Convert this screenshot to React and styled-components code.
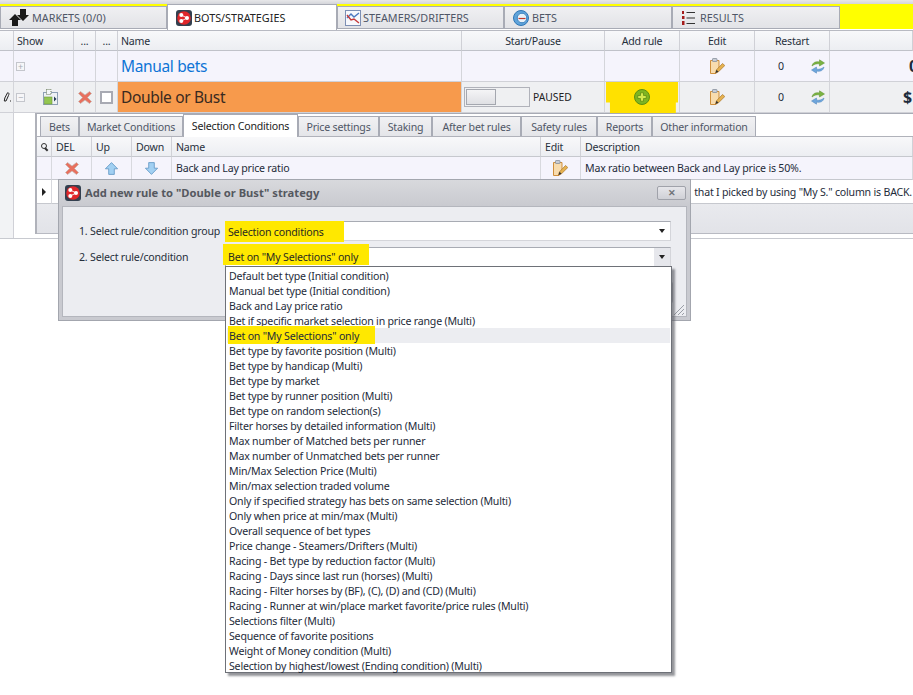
import styled, { createGlobalStyle } from 'styled-components';

const GlobalStyle = createGlobalStyle`
  html, body {
    margin: 0;
    padding: 0;
    background: #fff;
  }
  body {
    font-family: 'Noto Sans', 'Open Sans', sans-serif;
    font-size: 10.6px;
    letter-spacing: -0.2px;
    color: #1e2b3a;
  }
`;

const ITEMS = [
  'Default bet type (Initial condition)',
  'Manual bet type (Initial condition)',
  'Back and Lay price ratio',
  'Bet if specific market selection in price range (Multi)',
  'Bet on "My Selections" only',
  'Bet type by favorite position (Multi)',
  'Bet type by handicap (Multi)',
  'Bet type by market',
  'Bet type by runner position (Multi)',
  'Bet type on random selection(s)',
  'Filter horses by detailed information (Multi)',
  'Max number of Matched bets per runner',
  'Max number of Unmatched bets per runner',
  'Min/Max Selection Price (Multi)',
  'Min/max selection traded volume',
  'Only if specified strategy has bets on same selection (Multi)',
  'Only when price at min/max (Multi)',
  'Overall sequence of bet types',
  'Price change - Steamers/Drifters (Multi)',
  'Racing - Bet type by reduction factor (Multi)',
  'Racing - Days since last run (horses) (Multi)',
  'Racing - Filter horses by (BF), (C), (D) and (CD) (Multi)',
  'Racing - Runner at win/place market favorite/price rules (Multi)',
  'Selections filter (Multi)',
  'Sequence of favorite positions',
  'Weight of Money condition (Multi)',
  'Selection by highest/lowest (Ending condition) (Multi)',
];

const DETAIL_TABS = [
  ['Bets', 39],
  ['Market Conditions', 104],
  ['Selection Conditions', 115],
  ['Price settings', 81],
  ['Staking', 53],
  ['After bet rules', 89],
  ['Safety rules', 76],
  ['Reports', 55],
  ['Other information', 104],
];

const MAIN_COLUMNS = '14px 60px 22px 22px 344px 143px 75px 75px 75px 1fr';
const SUB_COLUMNS = '15px 40px 40px 40px 369px 40px 1fr';

function Logo({ size = 16 }) {
  return (
    <svg width={size} height={size} viewBox="0 0 16 16">
      <rect width="16" height="16" rx="3" fill="#33404f" />
      <circle cx="8" cy="8" r="6.8" fill="#e0262a" />
      <path d="M5.300 5l5.700 3-5.700 3" fill="none" stroke="#fff" strokeWidth=".9" />
      <circle cx="5.300" cy="5" r="2" fill="#fff" />
      <circle cx="5.300" cy="11" r="2" fill="#fff" />
      <circle cx="11" cy="8" r="2" fill="#fff" />
    </svg>
  );
}

function MarketsIcon() {
  return (
    <svg width="20" height="17" viewBox="0 0 20 17">
      <path d="M0 11 6 5l6 6H9v6H3v-6z" fill="#1a1a1a" />
      <path d="M20 6l-6 6-6-6h3V0h6v6z" fill="#1a1a1a" />
    </svg>
  );
}

function SteamersIcon() {
  return (
    <svg width="16" height="16" viewBox="0 0 16 16">
      <rect x=".5" y=".5" width="15" height="15" fill="#f7f8fc" stroke="#7d8fb4" />
      <path d="M2 8 6 4l3 3 5-4" fill="none" stroke="#4b78c0" strokeWidth="1.4" />
      <path d="M2 5l4 5 3-1 5 4" fill="none" stroke="#c5393a" strokeWidth="1.4" />
    </svg>
  );
}

function BetsIcon() {
  return (
    <svg width="16" height="16" viewBox="0 0 16 16">
      <circle cx="8" cy="8" r="7.500" fill="#5fa3da" stroke="#2f76b5" />
      <circle cx="9" cy="8" r="4.800" fill="#e9f1f8" stroke="#3c83bf" />
      <path d="M5.500 8.500h7" stroke="#c0392b" strokeWidth="1.200" />
    </svg>
  );
}

function ResultsIcon() {
  return (
    <svg width="13" height="14" viewBox="0 0 13 14">
      <path d="M0 0h2v3H0zM0 5h2.500v3H0zM0 10h2.500v4H0z" fill="#a51c1c" />
      <path d="M4.500 1.500H13M4.500 7H13M4.500 12.500H13" stroke="#333" />
    </svg>
  );
}

function EditIcon() {
  return (
    <svg width="15" height="16" viewBox="0 0 15 16">
      <path d="M.5 2.500h8.500v9.500L6 15.500H.5z" fill="#f8dcae" stroke="#cf8f3c" />
      <rect x="2.500" y=".5" width="4.500" height="3" rx=".6" fill="#c8cdd6" stroke="#7d8794" strokeWidth=".7" />
      <path d="M5.500 15l1-3.200L12.500 5.500 14.800 7.500l-6.300 6.300z" fill="#e6b24f" stroke="#a9762a" strokeWidth=".7" />
      <path d="M5.500 15l1-3.200 2 2z" fill="#333" />
    </svg>
  );
}

function RestartIcon() {
  return (
    <svg width="14" height="15" viewBox="0 0 14 15">
      <path d="M1 7C1.500 3.500 5 2 8.500 3V.8L13.500 4 8.500 7V5C6 4.400 3.500 5 1 7z" fill="#7bb342" stroke="#5a8f2c" strokeWidth=".5" />
      <path d="M13 8c-.5 3.500-4 5-7.500 4v2.200L.5 11l5-3v2c2.500.6 5 0 7.500-2z" fill="#6ea6dc" stroke="#4a82bb" strokeWidth=".5" />
    </svg>
  );
}

function DeleteIcon() {
  return (
    <svg width="14" height="13" viewBox="0 0 14 13">
      <path
        d="M2.500.5 7 4 11.500.5 13.500 2.500 9.500 6.500 13.500 10.500 11.500 12.500 7 9 2.500 12.500.5 10.500 4.500 6.500.5 2.500z"
        fill="#e8705f"
        stroke="#c4b4ae"
        strokeWidth=".7"
      />
    </svg>
  );
}

function AddIcon() {
  return (
    <svg width="16" height="16" viewBox="0 0 16 16">
      <circle cx="8" cy="8" r="7.500" fill="#7fb522" stroke="#5d8f12" />
      <path d="M6.500 3.800h3v2.700h2.700v3H9.500v2.700h-3V9.500H3.800v-3h2.700z" fill="#d4e94e" stroke="#4c7a0c" strokeWidth=".6" />
    </svg>
  );
}

function StateIcon() {
  return (
    <svg width="15" height="16" viewBox="0 0 15 16">
      <rect x=".5" y="3.500" width="14" height="12" fill="#eef1f5" stroke="#8ea0b5" />
      <rect x="3.500" y=".5" width="4.500" height="5" fill="#f4f6f8" stroke="#6b7d5a" strokeDasharray="1 1" />
      <rect x="1.500" y="8" width="7.500" height="7" fill="#93c650" stroke="#6f9c36" strokeWidth=".6" />
      <path d="M11 7.500v5l2.500-2.500z" fill="#243a54" />
    </svg>
  );
}

function ArrowIcon({ down }) {
  return (
    <svg width="13" height="13" viewBox="0 0 13 13" style={{ transform: down ? 'scaleY(-1)' : undefined }}>
      <path d="M6.500.6 12.600 6.800H9.300v5.600H3.700V6.800H.4z" fill="#a2d0f2" stroke="#5c93c2" strokeWidth=".8" />
    </svg>
  );
}

function PencilMark() {
  return (
    <svg width="8" height="10" viewBox="0 0 8 10">
      <path d="M4.500.8C6 .5 6.300 1.800 5.500 3.500L3 9H1.300L1.800 6z M7 9h1" fill="none" stroke="#222" strokeWidth="1" />
    </svg>
  );
}

export default function App() {
  return (
    <Page>
      <GlobalStyle />
      <TopStrip />
      <TabBar>
        <MainTab $width={167} $pad={8}>
          <MarketsIcon />
          MARKETS (0/0)
        </MainTab>
        <MainTab $width={170} $active $pad={8} $gap={2}>
          <Logo />
          BOTS/STRATEGIES
        </MainTab>
        <MainTab $width={167} $pad={7} $gap={2}>
          <SteamersIcon />
          STEAMERS/DRIFTERS
        </MainTab>
        <MainTab $width={168} $pad={8}>
          <BetsIcon />
          BETS
        </MainTab>
        <MainTab $width={168} $pad={9} $gap={5}>
          <ResultsIcon />
          RESULTS
        </MainTab>
        <TabFiller />
      </TabBar>

      <MainGrid>
        <HeaderCell />
        <HeaderCell $pad={3}>Show</HeaderCell>
        <HeaderCell $align="center">...</HeaderCell>
        <HeaderCell $align="center">...</HeaderCell>
        <HeaderCell $pad={3}>Name</HeaderCell>
        <HeaderCell $align="center">Start/Pause</HeaderCell>
        <HeaderCell $align="center">Add rule</HeaderCell>
        <HeaderCell $align="center">Edit</HeaderCell>
        <HeaderCell $align="center">Restart</HeaderCell>
        <HeaderCell />

        <RowCell $tint="#f5f4fc" />
        <RowCell $tint="#f5f4fc" $pad={2}>
          <Expander>+</Expander>
        </RowCell>
        <RowCell $tint="#f5f4fc" />
        <RowCell $tint="#f5f4fc" />
        <NameCell $color="#0f74d6">Manual bets</NameCell>
        <RowCell $tint="#f5f4fc" />
        <RowCell $tint="#f5f4fc" />
        <RowCell $tint="#f5f4fc" $align="center">
          <EditIcon />
        </RowCell>
        <RestartCell $tint="#f5f4fc">
          <span>0</span>
          <RestartIcon />
        </RestartCell>
        <AmountCell $tint="#f5f4fc" $pad={79}>
          0
        </AmountCell>

        <RowCell $align="center">
          <PencilMark />
        </RowCell>
        <ShowCell>
          <Expander>−</Expander>
          <StateIcon />
        </ShowCell>
        <RowCell $align="center">
          <DeleteIcon />
        </RowCell>
        <RowCell $align="center">
          <CheckBox />
        </RowCell>
        <NameCell $bg="#f79a4c" $color="#3a2a20">
          Double or Bust
        </NameCell>
        <StartCell>
          <Toggle>
            <ToggleKnob />
          </Toggle>
          PAUSED
        </StartCell>
        <AddRuleCell>
          <AddRuleMark />
          <AddRuleIcon>
            <AddIcon />
          </AddRuleIcon>
        </AddRuleCell>
        <RowCell $align="center">
          <EditIcon />
        </RowCell>
        <RestartCell>
          <span>0</span>
          <RestartIcon />
        </RestartCell>
        <AmountCell $pad={73}>$</AmountCell>
      </MainGrid>

      <DetailArea>
        <DetailGutter />
        <DetailPanel>
          <DetailTabs>
            {DETAIL_TABS.map(([label, width]) => (
              <DetailTab key={label} $width={width} $active={label === 'Selection Conditions'}>
                {label}
              </DetailTab>
            ))}
          </DetailTabs>
          <SubGrid>
            <SubHeader $align="center">
              <SearchGlyph />
            </SubHeader>
            <SubHeader>DEL</SubHeader>
            <SubHeader>Up</SubHeader>
            <SubHeader>Down</SubHeader>
            <SubHeader>Name</SubHeader>
            <SubHeader>Edit</SubHeader>
            <SubHeader>Description</SubHeader>

            <SubCell $tint="#f5f4fc" />
            <SubCell $tint="#f5f4fc" $align="center">
              <DeleteIcon />
            </SubCell>
            <SubCell $tint="#f5f4fc" $align="center">
              <ArrowIcon />
            </SubCell>
            <SubCell $tint="#f5f4fc" $align="center">
              <ArrowIcon down />
            </SubCell>
            <SubCell $tint="#f5f4fc">Back and Lay price ratio</SubCell>
            <SubCell $tint="#f5f4fc" $align="center">
              <EditIcon />
            </SubCell>
            <SubCell $tint="#f5f4fc">Max ratio between Back and Lay price is 50%.</SubCell>

            <SubCell $align="center">
              <RowPointer />
            </SubCell>
            <SubCell />
            <SubCell />
            <SubCell />
            <SubCell />
            <SubCell />
            <SubWideText>that I picked by using "My S." column is BACK.</SubWideText>
          </SubGrid>
          <DetailFooter />
        </DetailPanel>
      </DetailArea>

      <Dialog>
        <DialogTitle>
          <Logo />
          <DialogCaption>Add new rule to "Double or Bust" strategy</DialogCaption>
          <CloseButton>✕</CloseButton>
        </DialogTitle>
        <DialogBody>
          <FormRow>
            <FormLabel>1. Select rule/condition group</FormLabel>
            <Combo>
              <Highlight $left={-1} $top={-1} $width={119} $height={21}>
                Selection conditions
              </Highlight>
              <ComboArrow>
                <CaretShape />
              </ComboArrow>
            </Combo>
          </FormRow>
          <FormRow>
            <FormLabel>2. Select rule/condition</FormLabel>
            <Combo>
              <Highlight $left={-3} $top={-4} $width={146} $height={21} $shift={5}>
                Bet on "My Selections" only
              </Highlight>
              <ComboArrow $open>
                <CaretShape />
              </ComboArrow>
              <DropList>
                {ITEMS.map((item) => (
                  <DropItem key={item} $hover={item.startsWith('Bet on')}>
                    {item.startsWith('Bet on') ? <ItemMark>{item}</ItemMark> : item}
                  </DropItem>
                ))}
              </DropList>
            </Combo>
          </FormRow>
          <ButtonRow>
            <DialogButton />
          </ButtonRow>
          <Grip>
            <svg width="12" height="12" viewBox="0 0 12 12">
              <path d="M1 11 11 1M5 11l6-6M9 11l2-2" stroke="#9a9ea6" />
            </svg>
          </Grip>
        </DialogBody>
      </Dialog>
    </Page>
  );
}

const Page = styled.div`
  position: relative;
  width: 913px;
  height: 695px;
  overflow: hidden;
  background: #fff;
`;

const TopStrip = styled.div`
  height: 4px;
  background: linear-gradient(#e8e8ea, #d4d5da);
`;

const TabBar = styled.div`
  display: flex;
  align-items: flex-start;
  height: 26px;
  box-sizing: border-box;
  border-top: 2px solid #ffff00;
  background: #fff;
`;

const MainTab = styled.div`
  display: flex;
  align-items: center;
  gap: ${({ $gap }) => $gap ?? 3}px;
  box-sizing: border-box;
  width: ${({ $width }) => $width}px;
  height: ${({ $active }) => ($active ? 26 : 23)}px;
  margin-top: ${({ $active }) => ($active ? -2 : 0)}px;
  padding-left: ${({ $pad }) => $pad}px;
  border: 1px solid #a8abb5;
  border-bottom: ${({ $active }) => ($active ? '0' : '1px solid #a8abb5')};
  background: ${({ $active }) => ($active ? '#fff' : 'linear-gradient(#f0f0f2, #e2e3e7)')};
  color: ${({ $active }) => ($active ? '#222' : '#4f5666')};
  font-size: 10.8px;
  letter-spacing: 0;
  white-space: nowrap;
`;

const TabFiller = styled.div`
  flex: 1;
  height: 23px;
  background: #ffff00;
`;

const MainGrid = styled.div`
  display: grid;
  grid-template-columns: ${MAIN_COLUMNS};
  grid-template-rows: 20px 31px 31px;
  border-top: 1px solid #b8bac2;
`;

const HeaderCell = styled.div`
  display: flex;
  align-items: center;
  justify-content: ${({ $align }) => $align || 'flex-start'};
  padding-left: ${({ $pad }) => $pad || 0}px;
  border-right: 1px solid #cfd0d6;
  border-bottom: 1px solid #c0c2c9;
  background: linear-gradient(#f8f8fa, #eceef2);
  color: #27303c;
  min-width: 0;
`;

const RowCell = styled.div`
  display: flex;
  align-items: center;
  justify-content: ${({ $align }) => $align || 'flex-start'};
  padding-left: ${({ $pad }) => $pad || 0}px;
  border-right: 1px solid #d4d5da;
  border-bottom: 1px solid #d0d1d7;
  background: ${({ $tint }) => $tint || '#eff0f2'};
  min-width: 0;
`;

const ShowCell = styled(RowCell)`
  gap: 18px;
  padding-left: 2px;
`;

const NameCell = styled(RowCell)`
  padding-left: 3px;
  background: ${({ $bg }) => $bg || '#f5f4fc'};
  color: ${({ $color }) => $color};
  font-size: 15.5px;
  letter-spacing: -0.35px;
`;

const StartCell = styled(RowCell)`
  gap: 3px;
  padding-left: 2px;
  font-size: 10.3px;
  letter-spacing: 0;
  color: #222;
`;

const RestartCell = styled(RowCell)`
  justify-content: space-between;
  padding: 0 4px 0 23px;
`;

const AmountCell = styled(RowCell)`
  font-size: 16px;
  font-weight: 700;
  color: #1d2b3c;
  border-right: 0;
  overflow: hidden;
`;

const Expander = styled.span`
  display: flex;
  align-items: center;
  justify-content: center;
  box-sizing: border-box;
  width: 9px;
  height: 9px;
  border: 1px solid #c4c6cc;
  background: #f6f6f8;
  color: #a8abb2;
  font-size: 9px;
  line-height: 1;
`;

const CheckBox = styled.span`
  display: block;
  box-sizing: border-box;
  width: 13px;
  height: 13px;
  border: 2px solid #a8aab3;
  background: #fff;
`;

const Toggle = styled.span`
  display: block;
  box-sizing: border-box;
  width: 66px;
  height: 20px;
  padding: 1px;
  border: 1px solid #b0b2ba;
  background: #eff0f2;
`;

const ToggleKnob = styled.span`
  display: block;
  box-sizing: border-box;
  width: 30px;
  height: 16px;
  border: 1px solid #a4a7af;
  background: linear-gradient(#f4f4f6, #dfe0e4);
`;

const AddRuleCell = styled(RowCell)`
  position: relative;
  justify-content: center;
`;

const AddRuleMark = styled.span`
  position: absolute;
  top: 0;
  bottom: -1px;
  left: 1px;
  right: 1px;
  background: #ffe100;
  clip-path: polygon(0 0, 100% 0, 100% 66%, 97% 66%, 97% 100%, 5.5% 100%, 5.5% 66%, 0 66%);
`;

const AddRuleIcon = styled.span`
  position: relative;
  display: flex;
`;

const DetailArea = styled.div`
  display: flex;
  height: 125px;
  border-bottom: 1px solid #c8cad0;
`;

const DetailGutter = styled.div`
  width: 13px;
  flex: none;
  border-right: 1px solid #d0d1d7;
  background: #f2f3f5;
`;

const DetailPanel = styled.div`
  flex: 1;
  min-width: 0;
  box-sizing: border-box;
  margin: 0 0 4px 21px;
  border-left: 2px solid #b0b2ba;
  border-top: 1px solid #a8abb5;
  display: flex;
  flex-direction: column;
`;

const DetailTabs = styled.div`
  display: flex;
  align-items: flex-end;
  height: 23px;
  box-sizing: border-box;
  flex: none;
  padding-left: 3px;
  border-bottom: 1px solid #b0b2ba;
`;

const DetailTab = styled.div`
  display: flex;
  align-items: center;
  justify-content: center;
  box-sizing: border-box;
  width: ${({ $width }) => $width}px;
  height: ${({ $active }) => ($active ? 23 : 20)}px;
  margin-bottom: ${({ $active }) => ($active ? -1 : 0)}px;
  border: 1px solid #a8abb5;
  border-bottom: 0;
  background: ${({ $active }) => ($active ? '#fff' : 'linear-gradient(#f1f1f3, #e4e5e9)')};
  color: ${({ $active }) => ($active ? '#222' : '#4f5666')};
  white-space: nowrap;
`;

const SubGrid = styled.div`
  display: grid;
  grid-template-columns: ${SUB_COLUMNS};
  grid-template-rows: 20px 23px 24px;
  flex: none;
`;

const SubHeader = styled.div`
  display: flex;
  align-items: center;
  justify-content: ${({ $align }) => $align || 'flex-start'};
  padding-left: ${({ $align }) => ($align ? 0 : 4)}px;
  border-right: 1px solid #d0d1d7;
  border-bottom: 1px solid #c6c8ce;
  background: linear-gradient(#f8f8fa, #eceef2);
  color: #27303c;
`;

const SubCell = styled.div`
  display: flex;
  align-items: center;
  justify-content: ${({ $align }) => $align || 'flex-start'};
  padding-left: ${({ $align }) => ($align ? 0 : 4)}px;
  border-right: 1px solid #d8d9de;
  border-bottom: 1px solid #c6c8ce;
  background: ${({ $tint }) => $tint || '#fff'};
  white-space: nowrap;
  min-width: 0;
`;

const SubWideText = styled(SubCell)`
  justify-content: flex-end;
  padding-right: 1px;
  border-right: 0;
  overflow: hidden;
`;

const SearchGlyph = styled.span`
  position: relative;
  display: block;
  box-sizing: border-box;
  width: 6px;
  height: 6px;
  border: 1px solid #333;
  border-radius: 50%;
  margin: -2px 0 0 -1px;

  &::after {
    content: '';
    position: absolute;
    left: 3px;
    top: 3px;
    width: 4px;
    height: 1.500px;
    background: #333;
    transform: rotate(45deg);
    transform-origin: left center;
  }
`;

const RowPointer = styled.span`
  display: block;
  width: 0;
  height: 0;
  border-left: 4px solid #222;
  border-top: 4px solid transparent;
  border-bottom: 4px solid transparent;
`;

const DetailFooter = styled.div`
  flex: 1;
  border-bottom: 1px solid #b8bac2;
  background: linear-gradient(#e9eaee, #e2e3e8);
`;

const Dialog = styled.div`
  position: absolute;
  left: 58px;
  top: 179px;
  box-sizing: border-box;
  width: 633px;
  height: 142px;
  border: 1px solid #a3a6ae;
  background: linear-gradient(#d8d9dd, #c9cad0 26px, #c9cad0);
  display: flex;
  flex-direction: column;
`;

const DialogTitle = styled.div`
  display: flex;
  align-items: center;
  gap: 4px;
  height: 26px;
  box-sizing: border-box;
  flex: none;
  padding: 0 4px 1px 6px;
`;

const DialogCaption = styled.span`
  flex: 1;
  font-weight: 700;
  font-size: 11.2px;
  letter-spacing: 0;
  color: #55585f;
`;

const CloseButton = styled.span`
  display: flex;
  align-items: center;
  justify-content: center;
  box-sizing: border-box;
  width: 29px;
  height: 14px;
  border: 1px solid #a0a2aa;
  border-radius: 2px;
  background: linear-gradient(#e6e6ea, #cfd0d6);
  color: #707278;
  font-size: 9px;
  font-weight: 700;
`;

const DialogBody = styled.div`
  position: relative;
  flex: 1;
  margin: 0 3px 3px;
  padding: 14px 15px 0 16px;
  border: 1px solid #b4b6bd;
  background: #ecedf1;
  display: flex;
  flex-direction: column;
  gap: 6px;
`;

const FormRow = styled.div`
  display: flex;
  align-items: center;
  flex: none;
`;

const FormLabel = styled.span`
  width: 146px;
  flex: none;
  color: #262f3b;
  white-space: nowrap;
`;

const Combo = styled.div`
  position: relative;
  flex: 1;
  display: flex;
  align-items: center;
  box-sizing: border-box;
  height: 20px;
  border: 1px solid #a8abb3;
  border-bottom-color: #d4d5da;
  border-right-color: #d4d5da;
  background: #fff;
`;

const Highlight = styled.span`
  position: absolute;
  left: ${({ $left }) => $left}px;
  top: ${({ $top }) => $top}px;
  display: flex;
  align-items: center;
  box-sizing: border-box;
  width: ${({ $width }) => $width}px;
  height: ${({ $height }) => $height}px;
  padding-left: ${({ $left }) => 2 - $left}px;
  padding-top: ${({ $shift }) => $shift || 0}px;
  background: #ffe800;
  color: #2a2a20;
  white-space: nowrap;
`;

const ComboArrow = styled.span`
  position: absolute;
  right: 0;
  top: 0;
  bottom: 0;
  width: 16px;
  display: flex;
  align-items: center;
  justify-content: center;
  background: ${({ $open }) => ($open ? '#e6e7ec' : 'transparent')};
`;

const CaretShape = styled.span`
  display: block;
  width: 0;
  height: 0;
  border-top: 4px solid #222;
  border-left: 3.500px solid transparent;
  border-right: 3.500px solid transparent;
`;

const DropList = styled.div`
  position: absolute;
  z-index: 2;
  left: -1px;
  top: 18px;
  box-sizing: border-box;
  width: 447px;
  height: 407px;
  padding: 1px;
  border: 1px solid #6e7178;
  background: #fff;
  box-shadow: 3px 3px 2px rgba(90, 92, 100, 0.65);
`;

const DropItem = styled.div`
  position: relative;
  isolation: isolate;
  display: flex;
  align-items: center;
  height: 15px;
  padding-left: 2px;
  background: ${({ $hover }) => ($hover ? '#ecedf1' : 'transparent')};
  color: #1e2b3a;
  white-space: nowrap;
`;

const ItemMark = styled.span`
  position: relative;

  &::before {
    content: '';
    position: absolute;
    z-index: -1;
    left: -1px;
    top: -3px;
    bottom: -1px;
    width: 147px;
    background: #ffe800;
  }
`;

const ButtonRow = styled.div`
  display: flex;
  justify-content: flex-end;
  margin: 8px -2px 0 0;
`;

const DialogButton = styled.span`
  display: block;
  box-sizing: border-box;
  width: 72px;
  height: 23px;
  border: 1px solid #a8abb3;
  border-radius: 3px;
  background: linear-gradient(#f0f0f3, #dcdde2);
`;

const Grip = styled.span`
  position: absolute;
  right: 1px;
  bottom: 0;
  display: flex;
`;
